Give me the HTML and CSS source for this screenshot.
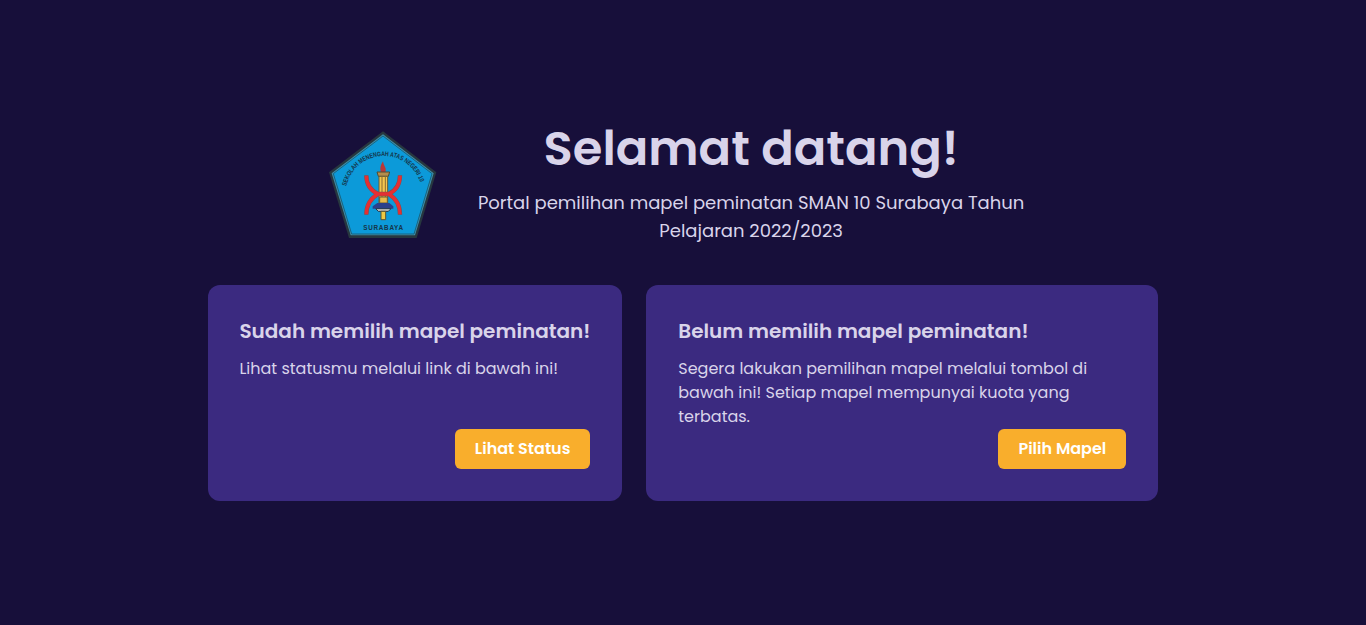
FILE: index.html
```html
<!DOCTYPE html>
<html lang="id">
<head>
<meta charset="utf-8">
<title>Portal Peminatan SMAN 10 Surabaya</title>
<link rel="stylesheet" href="styles.css">
</head>
<body>
<main class="page">
  <header class="hero">
    <svg class="logo" viewBox="0 0 360 360" role="img" aria-label="Logo SMAN 10 Surabaya">
      <path d="M180 19 340 142 281 339H78L18 142Z" fill="#27373f"/>
      <path d="M180 28 332 145 276 331H83L26 145Z" fill="#3f8fa8"/>
      <path d="M180 33 327 146 273 327H86L31 146Z" fill="#0c9ad9" stroke="#176482" stroke-width="3"/>
      <path id="arc" d="M70 184A115 115 0 0 1 295 184" fill="none"/>
      <text class="motto"><textPath href="#arc" textLength="300" lengthAdjust="spacingAndGlyphs">SEKOLAH MENENGAH ATAS NEGERI 10</textPath></text>
      <path d="M180 109C169 126 172 134 174 143H187C192 128 182 124 180 109Z" fill="#b93738"/>
      <path d="M162 141H200L196 154H166Z" fill="#b58d4c" stroke="#514d32" stroke-width="3"/>
      <path d="M168 154H194V236H168Z" fill="#f3c64d" stroke="#685b35" stroke-width="3"/>
      <path d="M177 154V236M187 154V236" stroke="#8a6a32" stroke-width="3"/>
      <path d="M130 151C130 180 144 197 165 207H197C218 197 231 180 231 151M130 269C130 241 145 219 165 207H197C217 219 231 241 231 269" fill="none" stroke="#80504f" stroke-width="13"/>
      <path d="M130 152C130 180 144 197 165 207H197C218 197 231 180 231 152M130 268C130 241 145 219 165 207H197C217 219 231 241 231 268" fill="none" stroke="#e52f32" stroke-width="10"/>
      <path d="M170 216H193V234H170Z" fill="#e9b94a" stroke="#685b35" stroke-width="3"/>
      <path d="M163 234H199L211 244V251H149V244Z" fill="#2c3f8a"/>
      <path d="M158 251H204L196 259H166Z" fill="#c9c7c1" stroke="#24364c" stroke-width="3"/>
      <path d="M174 259H188V284H174Z" fill="#f0c943" stroke="#5e5631" stroke-width="3"/>
      <text class="city" x="121" y="314" textLength="119">SURABAYA</text>
    </svg>
    <div class="intro">
      <h1 class="headline">Selamat datang!</h1>
      <p class="lead">Portal pemilihan mapel peminatan SMAN 10 Surabaya Tahun Pelajaran 2022/2023</p>
    </div>
  </header>
  <section class="cards">
    <article class="card">
      <h2 class="title">Sudah memilih mapel peminatan!</h2>
      <p class="copy">Lihat statusmu melalui link di bawah ini!</p>
      <a class="button">Lihat Status</a>
    </article>
    <article class="card">
      <h2 class="title">Belum memilih mapel peminatan!</h2>
      <p class="copy">Segera lakukan pemilihan mapel melalui tombol di bawah ini! Setiap mapel mempunyai kuota yang terbatas.</p>
      <a class="button">Pilih Mapel</a>
    </article>
  </section>
</main>
</body>
</html>
```
FILE: styles.css
```css
* { box-sizing: border-box; margin: 0; }
body { background: #170f3a; color: #d9d4ea; font-family: Poppins, Inter, sans-serif; }
.page { width: 950.9px; margin: 0 auto; padding-top: 125px; }
.hero { display: flex; gap: 21.7px; height: 160px; padding-left: 115.4px; }
.logo { width: 120px; height: 120px; flex: none; }
.motto, .city { font-family: "Liberation Sans", sans-serif; font-weight: 700; fill: #153448; }
.motto { font-size: 20px; }
.city { font-size: 19px; }
.intro { width: 573px; text-align: center; }
.headline { font-size: 48px; line-height: 48px; font-weight: 600; }
.lead { margin-top: 16px; font-size: 18px; line-height: 28px; }
.cards { display: grid; grid-template-columns: 414.9px 511.9px; gap: 24px; }
.card { display: flex; flex-direction: column; height: 216px; padding: 32px 32.05px 32px 31.85px; border-radius: 12px; background: #3b2a80; }
.title { font-size: 20px; line-height: 28px; font-weight: 600; white-space: nowrap; }
.copy { margin-top: 12px; font-size: 16px; line-height: 24px; }
.button { align-self: flex-end; margin-top: auto; height: 40px; padding: 0 20px; border-radius: 6px; background: #f9ae2c; color: #fff; font-weight: 600; line-height: 40px; }
```
